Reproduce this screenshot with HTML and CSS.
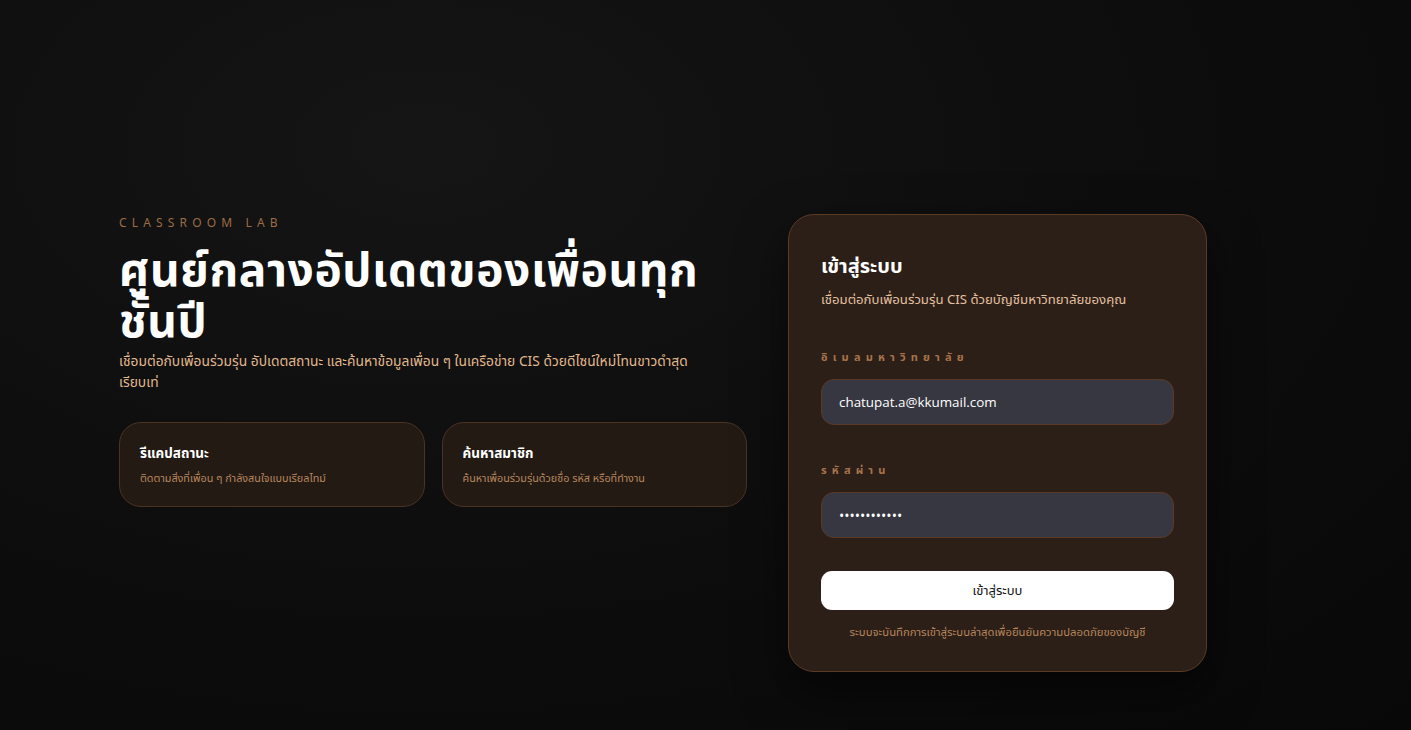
FILE: index.html
```html
<!DOCTYPE html>
<html lang="th">
<head>
<meta charset="utf-8">
<title>Classroom Lab</title>
<link rel="stylesheet" href="styles.css">
</head>
<body>
<main class="page">
  <section class="intro">
    <p class="eyebrow">CLASSROOM LAB</p>
    <h1 class="headline">ศูนย์กลางอัปเดตของเพื่อนทุกชั้นปี</h1>
    <p class="lead">เชื่อมต่อกับเพื่อนร่วมรุ่น อัปเดตสถานะ และค้นหาข้อมูลเพื่อน ๆ ในเครือข่าย CIS ด้วยดีไซน์ใหม่โทนขาวดำสุด เรียบเท่</p>
    <div class="features">
      <div class="feature">
        <h3 class="feature-title">รีแคปสถานะ</h3>
        <p class="feature-text">ติดตามสิ่งที่เพื่อน ๆ กำลังสนใจแบบเรียลไทม์</p>
      </div>
      <div class="feature">
        <h3 class="feature-title">ค้นหาสมาชิก</h3>
        <p class="feature-text">ค้นหาเพื่อนร่วมรุ่นด้วยชื่อ รหัส หรือที่ทำงาน</p>
      </div>
    </div>
  </section>
  <section class="login">
    <h2 class="login-title">เข้าสู่ระบบ</h2>
    <p class="login-sub">เชื่อมต่อกับเพื่อนร่วมรุ่น CIS ด้วยบัญชีมหาวิทยาลัยของคุณ</p>
    <form class="form">
      <label class="field">
        <span class="field-label">อิเมลมหาวิทยาลัย</span>
        <input class="input" type="email" value="chatupat.a@kkumail.com">
      </label>
      <label class="field">
        <span class="field-label">รหัสผ่าน</span>
        <input class="input input-pass" type="password" value="abcdefghijkl">
      </label>
      <button class="submit" type="button">เข้าสู่ระบบ</button>
    </form>
    <p class="note">ระบบจะบันทึกการเข้าสู่ระบบล่าสุดเพื่อยืนยันความปลอดภัยของบัญชี</p>
  </section>
</main>
</body>
</html>
```

FILE: styles.css
```css
* { box-sizing: border-box; }
html, body { height: 100%; }
body {
  margin: 0;
  font-family: "Noto Sans", "Noto Sans Thai", "Open Sans", "DejaVu Sans", sans-serif;
  background: radial-gradient(ellipse at 30% 20%, #151515 0%, #0e0e0e 45%, #080808 100%);
  color: #fff;
  min-height: 730px;
}
.page {
  display: flex;
  align-items: flex-start;
  gap: 41px;
  padding: 214px 0 0 119px;
}
.intro {
  width: 628px;
  padding-top: 1px;
}
.eyebrow {
  margin: 0;
  font-size: 12px;
  line-height: 16px;
  letter-spacing: 0.43em;
  color: #9c6c46;
}
.headline {
  margin: 12px 0 0;
  font-size: 46px;
  line-height: 51px;
  font-weight: 700;
  letter-spacing: 0.6px;
  max-width: 605px;
  color: #fff;
}
.lead {
  margin: 5px 0 0;
  font-size: 13.8px;
  line-height: 21px;
  color: #e2b88e;
  max-width: 575px;
}
.features {
  display: grid;
  grid-template-columns: 1fr 1fr;
  gap: 17px;
  margin-top: 30px;
}
.feature {
  height: 85px;
  padding: 21px 20px;
  border-radius: 22px;
  background: #231a14;
  border: 1px solid #4b3323;
}
.feature-title {
  margin: 0;
  font-size: 13.5px;
  line-height: 18px;
  font-weight: 700;
  color: #fff;
}
.feature-text {
  margin: 9px 0 0;
  font-size: 10.8px;
  line-height: 14px;
  color: #b8875e;
}
.login {
  width: 419px;
  height: 458px;
  padding: 37px 32px 0;
  border-radius: 26px;
  background: #2c1f18;
  border: 1px solid #5a3b25;
  box-shadow: 0 20px 50px rgba(0,0,0,0.55);
}
.login-title {
  margin: 0;
  font-size: 20px;
  line-height: 28px;
  font-weight: 700;
  color: #fff;
}
.login-sub {
  margin: 10px 0 0;
  font-size: 13.2px;
  line-height: 18px;
  color: #e3c0a0;
}
.form {
  display: flex;
  flex-direction: column;
  margin-top: 42px;
}
.field {
  display: flex;
  flex-direction: column;
  gap: 15px;
  margin-bottom: 38px;
}
.field + .field { margin-bottom: 33px; }
.field-label {
  font-size: 11px;
  line-height: 14px;
  font-weight: 700;
  letter-spacing: 0.47em;
  color: #a8744c;
}
.input {
  height: 46px;
  padding: 0 17px;
  border-radius: 13px;
  border: 1px solid #5a3a27;
  background: #373741;
  color: #fff;
  font-family: "Open Sans", "Noto Sans", sans-serif;
  font-size: 13.4px;
  outline: none;
}
.input-pass {
  font-size: 14px;
}
.submit {
  height: 39px;
  border: 0;
  border-radius: 11px;
  background: #fff;
  color: #111;
  font-family: inherit;
  font-size: 13px;
  cursor: pointer;
}
.note {
  margin: 15px 0 0;
  text-align: center;
  font-size: 11.3px;
  line-height: 14px;
  color: #b8865c;
}
```
